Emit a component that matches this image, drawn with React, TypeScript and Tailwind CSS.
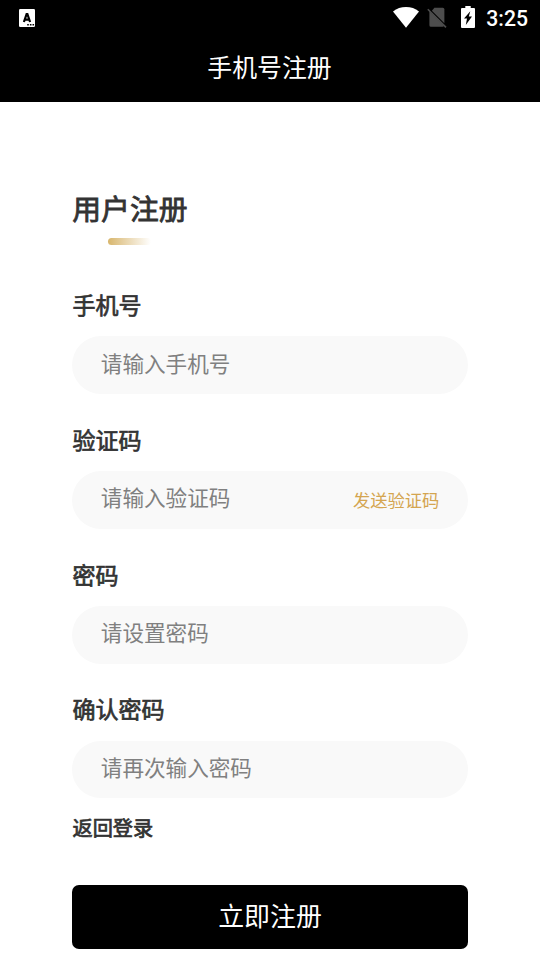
import React from "react";

function KeyboardIcon() {
  return (
    <svg width="16" height="18" viewBox="0 0 16 18" aria-hidden="true">
      <rect width="16" height="18" rx="1.2" fill="#fff" />
      <path
        d="M4.900 13 7.600 5.200h.8L11.100 13M6 10.600h4"
        fill="none"
        stroke="#000"
        strokeWidth="2.200"
      />
      <path d="M8.200 15h1.600v1.600H8.200zM10.900 15h1.600v1.600h-1.600zM13.500 15h1.600v1.600h-1.600z" fill="#000" />
    </svg>
  );
}

function WifiIcon() {
  return (
    <svg width="26" height="21" viewBox="0 0 26 21" aria-hidden="true">
      <path d="M0 4.4C3.7 1.4 8.2 0 13 0s9.300 1.400 13 4.400L13 20.800z" fill="#fff" />
    </svg>
  );
}

function NoSimIcon() {
  return (
    <svg width="20" height="21" viewBox="0 0 20 21" aria-hidden="true">
      <path d="M7.400 0.800H15.800a1.600 1.600 0 0 1 1.600 1.600v13.800L4.900 3.700z" fill="#4d4d4d" />
      <path d="M2.400 4.200 17 18.800a1.600 1.600 0 0 1-1.400 1H4a1.600 1.600 0 0 1-1.600-1.600z" fill="#4d4d4d" />
      <path d="M0.800 2.200 19 20.400" stroke="#4d4d4d" strokeWidth="1.600" />
    </svg>
  );
}

function BatteryIcon() {
  return (
    <svg width="14" height="22" viewBox="0 0 14 22" aria-hidden="true">
      <path d="M4.300 0h5.400v2H13a1 1 0 0 1 1 1v18a1 1 0 0 1-1 1H1a1 1 0 0 1-1-1V3a1 1 0 0 1 1-1h3.300z" fill="#fff" />
      <path d="M9.300 5.200 3 12.600h3L4.800 19l6.200-8.600H7.800z" fill="#000" />
    </svg>
  );
}

type FieldProps = {
  label: string;
  placeholder: string;
  type?: string;
  action?: string;
};

function Field({ label, placeholder, type = "text", action }: FieldProps) {
  return (
    <div className="h-[134.800px]">
      <label className="-mt-[0.400px] block h-[47.400px] pl-[0.500px] text-[23.040px] leading-[30px] [-webkit-text-stroke:0.700px_#333]">
        {label}
      </label>
      <div className="flex h-[57.600px] items-center rounded-full bg-[#f9f9f9] px-[28.800px]">
        <input
          type={type}
          placeholder={placeholder}
          className="mb-[0.800px] h-8 w-0 flex-1 bg-transparent pb-[4px] text-[21.600px] outline-none placeholder:text-[#808080]"
        />
        {action && (
          <button type="button" className="text-[17.280px] leading-6 text-[#d4a550]">
            {action}
          </button>
        )}
      </div>
    </div>
  );
}

export default function App() {
  return (
    <div className="h-[960px] w-[540px] overflow-hidden bg-white font-['Noto_Sans_CJK_SC',sans-serif] text-[#333]">
      <header className="h-[102px] bg-black text-white">
        <div className="flex h-9 items-center justify-between pr-3 pl-[19px]">
          <KeyboardIcon />
          <div className="flex items-center">
            <span className="pb-[2px]">
              <WifiIcon />
            </span>
            <span className="ml-[8px] pb-[2px]">
              <NoSimIcon />
            </span>
            <span className="mr-[11px] ml-[14px] pb-[2px]">
              <BatteryIcon />
            </span>
            <span className="pt-[2px] font-[Roboto,sans-serif] text-[21.200px] leading-6 font-medium">3:25</span>
          </div>
        </div>
        <h1 className="pt-[12px] pr-[1px] text-center text-[24.900px] leading-[36px]">手机号注册</h1>
      </header>

      <main className="px-[72px] pt-[87px]">
        <h2 className="pl-[0.300px] text-[28.800px] leading-[38px] [-webkit-text-stroke:0.800px_#333]">用户注册</h2>
        <div className="mt-[11px] ml-[36px] h-[7px] w-[43px] rounded-full bg-linear-to-r from-[#d8b66c] to-white" />

        <form className="flex flex-col pt-[44.400px]">
          <Field label="手机号" placeholder="请输入手机号" />
          <Field label="验证码" placeholder="请输入验证码" action="发送验证码" />
          <Field label="密码" placeholder="请设置密码" type="password" />
          <Field label="确认密码" placeholder="请再次输入密码" type="password" />
          <a className="-mt-[15.900px] block w-fit pl-[0.500px] text-[20.160px] leading-[30px] [-webkit-text-stroke:0.700px_#333]">返回登录</a>
          <button
            type="button"
            className="mt-[42.200px] block h-16 w-full rounded-[7px] bg-black pb-[3px] text-[25.920px] text-white"
          >
            立即注册
          </button>
        </form>
      </main>
    </div>
  );
}
